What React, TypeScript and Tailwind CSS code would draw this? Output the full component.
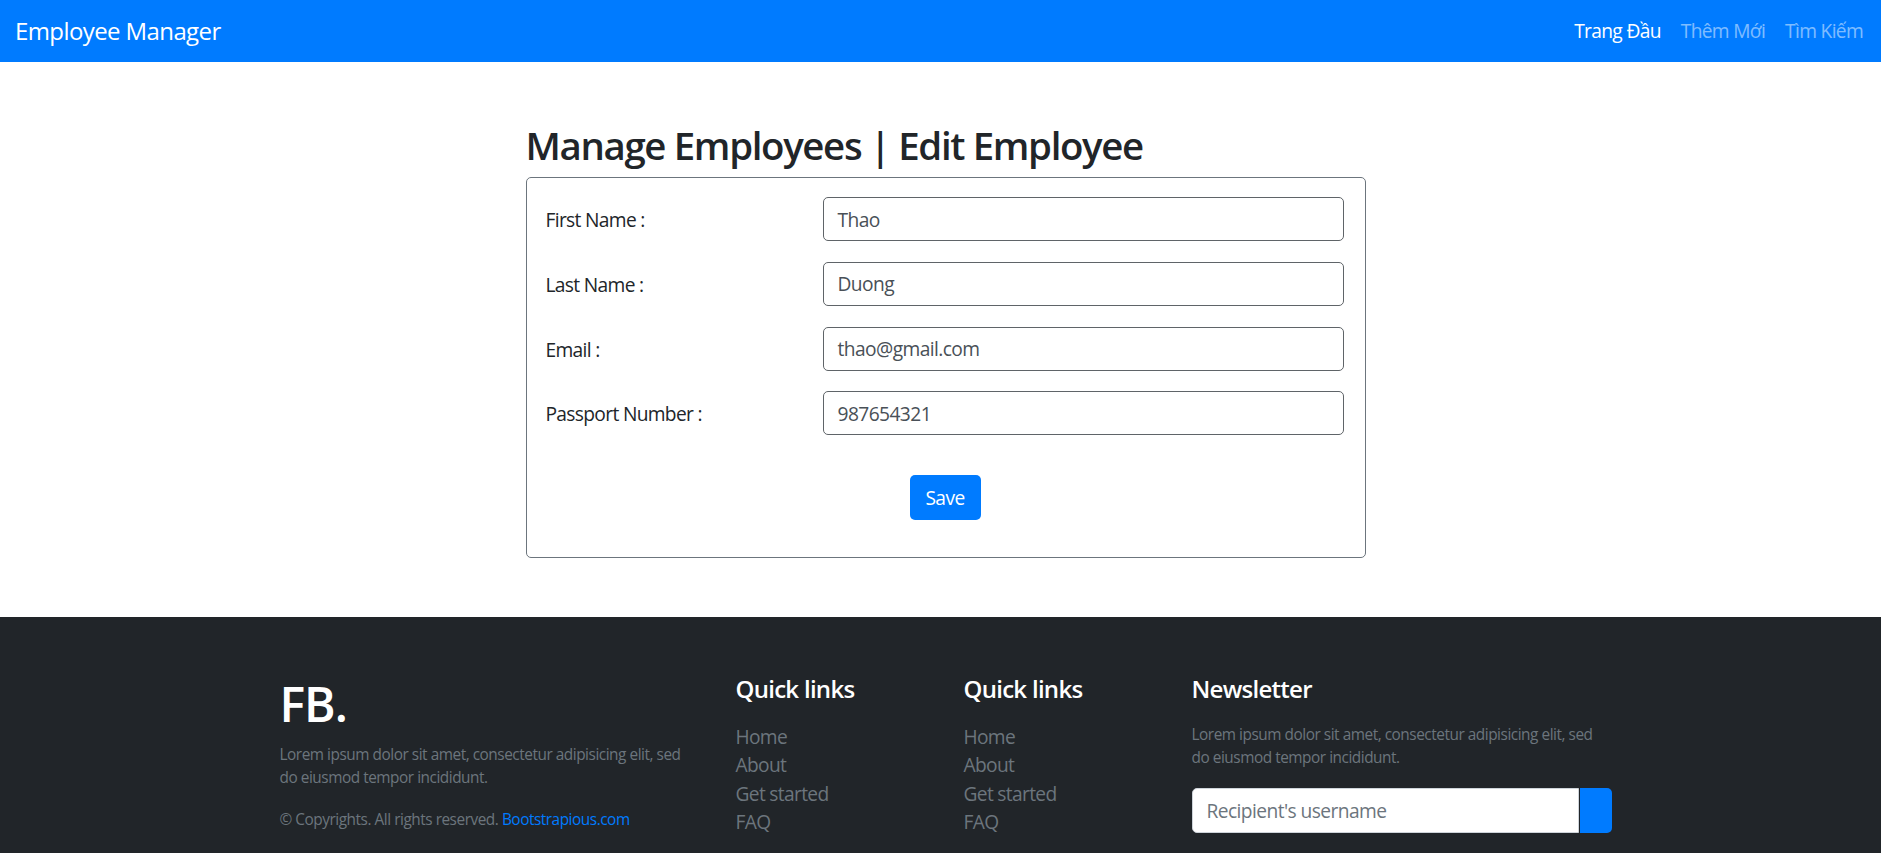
import React from "react";

const FONT = { fontFamily: '"Open Sans", "Noto Sans", "Liberation Sans", sans-serif' };

function Row({ label, value }: { label: string; value: string }) {
  return (
    <div className="flex items-center h-[44px]">
      <div className="w-[277px] pt-[3px] text-[19.2px] tracking-[-0.035em] text-[#212529]">{label}</div>
      <div className="w-[521px] h-[44px] border border-[#5f6468] rounded-[5px] flex items-center px-[14px] pt-[2px] text-[19.2px] tracking-[-0.03em] text-[#495057]">
        {value}
      </div>
    </div>
  );
}

function LinksCol() {
  return (
    <div className="px-[18px]">
      <h5 className="text-[24px] leading-[28.8px] font-semibold tracking-[-0.03em] text-white mb-[19px]">Quick links</h5>
      <ul className="text-[19.2px] leading-[28.2px] tracking-[-0.035em] text-[#6c757d]">
        <li>Home</li>
        <li>About</li>
        <li>Get started</li>
        <li>FAQ</li>
      </ul>
    </div>
  );
}

export default function App() {
  return (
    <div className="min-h-screen bg-white" style={FONT}>
      <nav className="h-[62px] bg-[#007bff] flex items-center justify-between pl-[15px] pr-[8px]">
        <span className="text-[24px] tracking-[-0.025em] text-white">Employee Manager</span>
        <div className="flex text-[19.2px] tracking-[-0.035em]">
          <span className="px-[10px] text-white">Trang Đầu</span>
          <span className="px-[10px] text-white/50">Thêm Mới</span>
          <span className="px-[10px] text-white/50">Tìm Kiếm</span>
        </div>
      </nav>

      <main className="flex justify-center pl-[10px] pt-[60px] pb-[59px]">
        <div className="w-[840px]">
          <h2 className="text-[38.4px] leading-[46px] font-semibold tracking-[-0.035em] text-[#212529] mb-[9px]">
            Manage Employees | Edit Employee
          </h2>
          <div className="border border-[#6c757d] rounded-[5px] pl-[19px] pr-[20px] pt-[19px] pb-[37px]">
            <div className="flex flex-col gap-[20.8px]">
              <Row label="First Name :" value="Thao" />
              <Row label="Last Name :" value="Duong" />
              <Row label="Email :" value="thao@gmail.com" />
              <Row label="Passport Number :" value="987654321" />
            </div>
            <div className="flex justify-center mt-[40px]">
              <button className="h-[45px] w-[71px] pt-[2px] rounded-[5px] bg-[#007bff] text-white text-[19.2px] tracking-[-0.03em]">
                Save
              </button>
            </div>
          </div>
        </div>
      </main>

      <footer className="bg-[#212529] pt-[58px] pb-[58px]">
        <div className="flex justify-center pl-[10px]">
          <div className="w-[1368px] grid grid-cols-[456px_228px_228px_456px]">
            <div className="px-[18px]">
              <h1 className="text-[48px] leading-[57.6px] font-semibold tracking-[-0.02em] text-white mb-[10px]">FB.</h1>
              <p className="text-[15.36px] leading-[23px] tracking-[-0.03em] text-[#6c757d] mb-[19px]">
                Lorem ipsum dolor sit amet, consectetur adipisicing elit, sed do eiusmod tempor incididunt.
              </p>
              <p className="text-[15.36px] leading-[23px] tracking-[-0.03em] text-[#6c757d]">
                © Copyrights. All rights reserved. <span className="text-[#007bff]">Bootstrapious.com</span>
              </p>
            </div>
            <LinksCol />
            <LinksCol />
            <div className="px-[18px]">
              <h5 className="text-[24px] leading-[28.8px] font-semibold tracking-[-0.03em] text-white mb-[19px]">Newsletter</h5>
              <p className="text-[15.36px] leading-[23px] tracking-[-0.03em] text-[#6c757d] mb-[19px]">
                Lorem ipsum dolor sit amet, consectetur adipisicing elit, sed do eiusmod tempor incididunt.
              </p>
              <div className="flex h-[45px]">
                <div className="w-[387px] h-[45px] bg-white border border-[#ced4da] rounded-l-[5px] flex items-center px-[14px] pt-[2px] text-[19.2px] tracking-[-0.03em] text-[#6c757d]">
                  Recipient's username
                </div>
                <div className="w-[32px] h-[45px] bg-[#007bff] rounded-r-[5px] ml-[1px]" />
              </div>
            </div>
          </div>
        </div>
      </footer>
    </div>
  );
}
